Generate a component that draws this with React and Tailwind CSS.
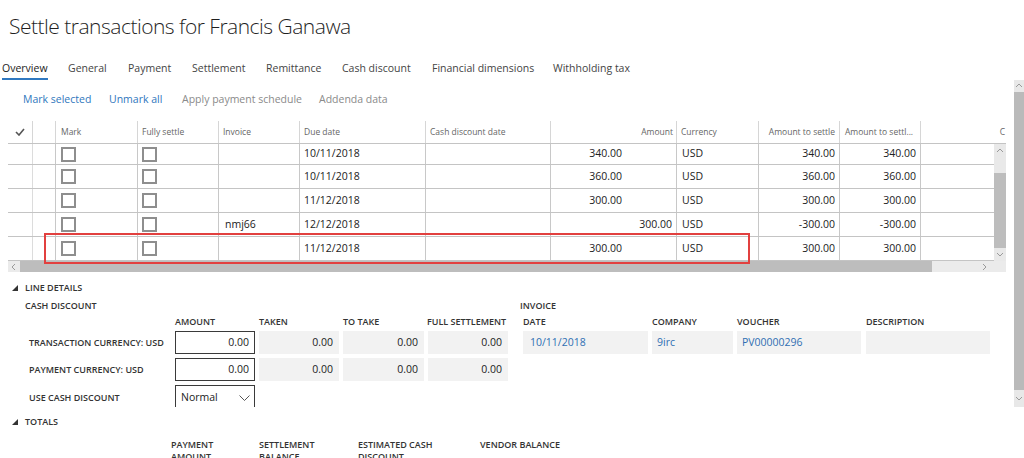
import React from 'react';

const TABS = [
  { label: 'Overview', w: 'w-[66px]', active: true },
  { label: 'General', w: 'w-[60px]' },
  { label: 'Payment', w: 'w-[64px]' },
  { label: 'Settlement', w: 'w-[74px]' },
  { label: 'Remittance', w: 'w-[76px]' },
  { label: 'Cash discount', w: 'w-[90px]' },
  { label: 'Financial dimensions', w: 'w-[121px]' },
  { label: 'Withholding tax', w: 'w-[100px]' },
];

const ROWS = [
  { first: true, invoice: '', due: '10/11/2018', amount: '340.00', settle: '340.00' },
  { invoice: '', due: '10/11/2018', amount: '360.00', settle: '360.00' },
  { invoice: '', due: '11/12/2018', amount: '300.00', settle: '300.00' },
  { invoice: 'nmj66', due: '12/12/2018', amount: '300.00', settle: '-300.00', flush: true },
  { invoice: '', due: '11/12/2018', amount: '300.00', settle: '300.00' },
];

function Chevron({ dir, className }) {
  const pts = {
    up: '1,5 4,2 7,5',
    down: '1,2 4,5 7,2',
    left: '5,1 2,4 5,7',
    right: '2,1 5,4 2,7',
  }[dir];
  return (
    <svg width="8" height="8" viewBox="0 0 8 8" className={className}>
      <polyline points={pts} fill="none" stroke="#9a9a9a" strokeWidth="1" />
    </svg>
  );
}

function Box() {
  return <div className="w-[15px] h-[15px] border-2 border-[#8e8e8e] bg-white" />;
}

function Triangle() {
  return (
    <svg width="6" height="6" viewBox="0 0 6 6" className="mr-[7px]">
      <polygon points="6,0 6,6 0,6" fill="#333" />
    </svg>
  );
}

export default function App() {
  return (
    <div className="relative w-[1024px] h-[458px] overflow-hidden bg-white text-[#222] font-['Open_Sans',sans-serif]">
      {/* title */}
      <div className="h-[55px] pl-[9px] pt-[9px] text-[21px] font-light leading-[34px] text-[#1f1f1f] tracking-[-0.5px]">
        Settle transactions for Francis Ganawa
      </div>

      {/* tabs */}
      <div className="flex h-[25px] pl-[2px] text-[10.5px] text-[#444]">
        {TABS.map((t) => (
          <div key={t.label} className={`${t.w} flex`}>
            <span className={`pt-[5px] leading-[16px] ${t.active ? 'border-b-2 border-[#2f78c0] text-[#222]' : ''}`}>{t.label}</span>
          </div>
        ))}
      </div>

      {/* actions */}
      <div className="flex items-center h-[40px] pl-[23px] text-[10.5px]">
        <span className="w-[86px] text-[#2f77bd]">Mark selected</span>
        <span className="w-[73px] text-[#2f77bd]">Unmark all</span>
        <span className="w-[137px] text-[#8a8a8a]">Apply payment schedule</span>
        <span className="text-[#8a8a8a]">Addenda data</span>
      </div>

      {/* grid */}
      <div className="relative ml-[8px] mt-[1px] w-[998px]">
        <div className="flex h-[23px] border-b border-[#c4c4c4] text-[8.5px] text-[#666] whitespace-nowrap">
          <div className="w-[25px] flex items-center justify-center border-r border-[#d6d6d6]">
            <svg width="10" height="8" viewBox="0 0 10 8"><polyline points="1,4 4,7 9,1" fill="none" stroke="#555" strokeWidth="1.6" /></svg>
          </div>
          <div className="w-[23px] border-r border-[#d6d6d6]" />
          <div className="w-[82px] pl-[5px] flex items-center border-r border-[#d6d6d6]">Mark</div>
          <div className="w-[81px] pl-[4px] flex items-center border-r border-[#d6d6d6]">Fully settle</div>
          <div className="w-[81px] pl-[4px] flex items-center border-r border-[#d6d6d6]">Invoice</div>
          <div className="w-[126px] pl-[4px] flex items-center border-r border-[#d6d6d6]">Due date</div>
          <div className="w-[125px] pl-[4px] flex items-center border-r border-[#d6d6d6]">Cash discount date</div>
          <div className="w-[126px] pr-[3px] flex items-center justify-end border-r border-[#d6d6d6]">Amount</div>
          <div className="w-[82px] pl-[4px] flex items-center border-r border-[#d6d6d6]">Currency</div>
          <div className="w-[81px] pr-[4px] flex items-center justify-end border-r border-[#d6d6d6]">Amount to settle</div>
          <div className="w-[81px] pl-[5px] flex items-center overflow-hidden border-r border-[#d6d6d6]">Amount to settl...</div>
          <div className="flex-1 flex items-center justify-end pr-[1px]">C</div>
        </div>

        <div className="flex">
          <div className="w-[986px]">
            {ROWS.map((r, i) => (
              <div key={i} className={`flex border-b border-[#c4c4c4] text-[10.5px] ${r.first ? 'h-[21px]' : 'h-[24px]'}`}>
                <div className="w-[25px] border-r border-[#dcdcdc]" />
                <div className="w-[23px] border-r border-[#c8c8c8]" />
                <div className="w-[82px] pl-[5px] flex items-center border-r border-[#c8c8c8]"><Box /></div>
                <div className="w-[81px] pl-[4px] flex items-center border-r border-[#c8c8c8]"><Box /></div>
                <div className="w-[81px] pl-[6px] flex items-center border-r border-[#c8c8c8]">{r.invoice}</div>
                <div className="w-[126px] pl-[4px] flex items-center border-r border-[#c8c8c8]">{r.due}</div>
                <div className="w-[125px] border-r border-[#c8c8c8]" />
                <div className={`w-[126px] flex items-center justify-end border-r border-[#c8c8c8] ${r.flush ? 'pr-[4px]' : 'pr-[54px]'}`}>{r.amount}</div>
                <div className="w-[82px] pl-[5px] flex items-center border-r border-[#c8c8c8]">USD</div>
                <div className="w-[81px] pr-[4px] flex items-center justify-end border-r border-[#c8c8c8]">{r.settle}</div>
                <div className="w-[81px] pr-[4px] flex items-center justify-end border-r border-[#c8c8c8]">{r.settle}</div>
                <div className="flex-1" />
              </div>
            ))}
          </div>
          <div className="w-[12px] flex flex-col bg-[#e9e9e9]">
            <div className="h-[29px] flex justify-center pt-[3px]"><Chevron dir="up" /></div>
            <div className="h-[75px] bg-[#bdbdbd]" />
            <div className="flex-1 flex justify-center items-center"><Chevron dir="down" /></div>
          </div>
        </div>

        <div className="flex h-[11px] bg-[#ebebeb]">
          <div className="w-[12px] flex items-center justify-center"><Chevron dir="left" /></div>
          <div className="w-[912px] bg-[#bdbdbd]" />
          <div className="flex-1 flex items-center justify-end pr-[17px]"><Chevron dir="right" /></div>
        </div>

        {/* highlight annotation */}
        <div className="absolute left-[36px] top-[112px] w-[706px] h-[31px] border-2 border-[#e2403f]" />
      </div>

      {/* line details */}
      <div className="h-[135px] overflow-hidden pl-[12px] pt-[11px] text-[9px] font-semibold text-[#333] uppercase">
        <div className="flex items-center h-[10px]"><Triangle />Line details</div>
        <div className="flex pl-[13px] mt-[5px]">
          <div className="w-[483px]">
            <div className="h-[16px] flex items-center">Cash discount</div>
            <div className="flex h-[16px] items-center">
              <div className="w-[150px]" />
              <div className="w-[84px]">Amount</div>
              <div className="w-[84px]">Taken</div>
              <div className="w-[84px]">To take</div>
              <div>Full settlement</div>
            </div>
            {['Transaction currency: USD', 'Payment currency: USD'].map((l, i) => (
              <div key={l} className={`flex items-center h-[23px] ${i ? 'mt-[4px]' : 'mt-[1px]'}`}>
                <div className="w-[150px] pl-[4px]">{l}</div>
                <div className="w-[80px] h-[23px] border border-[#3a3a3a] flex items-center justify-end pr-[5px] text-[10.5px] font-normal text-[#222]">0.00</div>
                <div className="w-[80px] ml-[4px] h-[23px] bg-[#f2f2f2] flex items-center justify-end pr-[6px] text-[10.5px] font-normal text-[#222]">0.00</div>
                <div className="w-[81px] ml-[4px] h-[23px] bg-[#f2f2f2] flex items-center justify-end pr-[6px] text-[10.5px] font-normal text-[#222]">0.00</div>
                <div className="w-[80px] ml-[4px] h-[23px] bg-[#f2f2f2] flex items-center justify-end pr-[6px] text-[10.5px] font-normal text-[#222]">0.00</div>
              </div>
            ))}
            <div className="flex items-start mt-[4px]">
              <div className="w-[150px] pl-[4px] pt-[6px]">Use cash discount</div>
              <div className="w-[80px] h-[26px] border border-[#3a3a3a] flex items-center justify-between pl-[5px] pr-[4px] text-[10.5px] font-normal normal-case text-[#222]">
                Normal
                <svg width="11" height="7" viewBox="0 0 11 7"><polyline points="0.5,0.5 5.5,5.5 10.5,0.5" fill="none" stroke="#555" strokeWidth="1" /></svg>
              </div>
            </div>
          </div>
          <div className="ml-[12px]">
            <div className="h-[16px] flex items-center">Invoice</div>
            <div className="flex h-[16px] items-center pl-[3px]">
              <div className="w-[129px]">Date</div>
              <div className="w-[85px]">Company</div>
              <div className="w-[129px]">Voucher</div>
              <div>Description</div>
            </div>
            <div className="flex mt-[1px] pl-[3px] h-[23px] text-[10.5px] font-normal normal-case text-[#2f6fb3]">
              <div className="w-[125px] bg-[#f2f2f2] flex items-center pl-[7px]">10/11/2018</div>
              <div className="w-[81px] ml-[4px] bg-[#f2f2f2] flex items-center pl-[5px]">9irc</div>
              <div className="w-[124px] ml-[4px] bg-[#f2f2f2] flex items-center pl-[5px]">PV00000296</div>
              <div className="w-[124px] ml-[5px] bg-[#f2f2f2]" />
            </div>
          </div>
        </div>
      </div>

      {/* totals */}
      <div className="pl-[12px] pt-[10px] text-[9px] font-semibold text-[#333] uppercase">
        <div className="flex items-center h-[10px]"><Triangle />Totals</div>
        <div className="flex pl-[159px] mt-[12px] leading-[12px]">
          <div className="w-[88px]">Payment<br />amount</div>
          <div className="w-[99px]">Settlement<br />balance</div>
          <div className="w-[122px]">Estimated cash<br />discount</div>
          <div>Vendor balance</div>
        </div>
      </div>

      {/* page scrollbar */}
      <div className="absolute right-0 top-[80px] w-[10px] h-[327px] flex flex-col bg-[#e8e8e8]">
        <div className="h-[12px] flex justify-center items-center"><Chevron dir="up" /></div>
        <div className="h-[298px] bg-[#bababa]" />
        <div className="flex-1 flex justify-center items-center"><Chevron dir="down" /></div>
      </div>
    </div>
  );
}
